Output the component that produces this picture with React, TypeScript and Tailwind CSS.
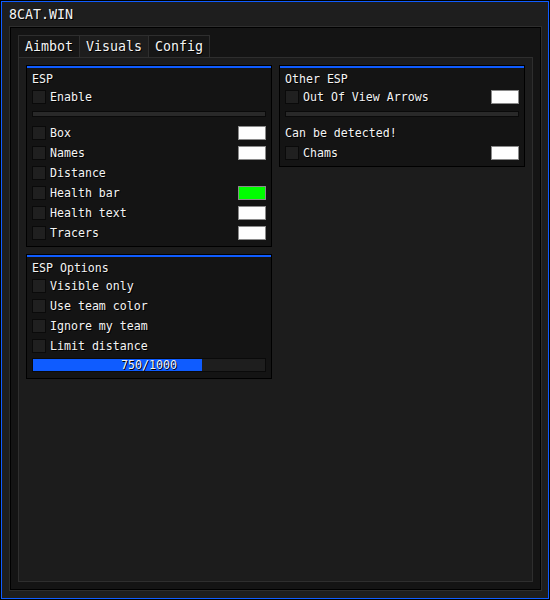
import React from 'react';

type Row = { label: string; color?: string };

const ESP_ROWS: Row[] = [
  { label: 'Box', color: 'white' },
  { label: 'Names', color: 'white' },
  { label: 'Distance' },
  { label: 'Health bar', color: 'green' },
  { label: 'Health text', color: 'white' },
  { label: 'Tracers', color: 'white' },
];

const OPTION_ROWS = ['Visible only', 'Use team color', 'Ignore my team', 'Limit distance'];

const shadow = '[text-shadow:1px_1px_0_#000]';

function Swatch({ color }: { color: string }) {
  return (
    <div
      className={
        color === 'green'
          ? 'w-[28px] h-[14px] border border-[#8a8a8a] bg-[#00ff00]'
          : 'w-[28px] h-[14px] border border-[#8a8a8a] bg-white'
      }
    />
  );
}

function CheckRow({ label, color }: Row) {
  return (
    <div className="flex items-center h-[14px] gap-[4px]">
      <div className="w-[14px] h-[14px] border border-[#0a0a0a] bg-[#202020]" />
      <span className={`flex-1 leading-[14px] ${shadow}`}>{label}</span>
      {color && <Swatch color={color} />}
    </div>
  );
}

function Separator() {
  return <div className="h-[6px] border border-[#0a0a0a] bg-[#292929]" />;
}

function Group({ title, children }: { title: string; children: React.ReactNode }) {
  return (
    <div className="border border-black bg-[#141414]">
      <div className="h-[2px] bg-[#0f5cff]" />
      <div className="px-[5px] pt-[4px] pb-[6px] flex flex-col">
        <div className={`h-[14px] leading-[14px] ${shadow}`}>{title}</div>
        {children}
      </div>
    </div>
  );
}

export default function App() {
  return (
    <div
      className="w-[550px] h-[600px] bg-black p-px text-[#f4f4f4]"
      style={{ fontFamily: '"DejaVu Sans Mono", monospace' }}
    >
      <div className="h-full border border-[#0f5cff] bg-[#1e1e1e] flex flex-col">
        <div className={`h-[24px] pl-[7px] pt-[2px] text-[13.3px] leading-[22px] ${shadow}`}>8CAT.WIN</div>

        <div className="ml-[7px] w-[533px] h-[565px] border border-[#2e2e2e]">
          <div className="h-full border border-black bg-[#141414] p-[7px] flex flex-col">
            {/* tabs */}
            <div className="flex h-[23px] text-[13.3px]">
              <div className={`px-[6px] border border-[#2e2e2e] bg-[#161616] leading-[21px] ${shadow}`}>Aimbot</div>
              <div className={`-ml-px px-[6px] border border-[#2e2e2e] bg-[#1d1d1d] leading-[21px] ${shadow}`}>Visuals</div>
              <div className={`-ml-px px-[6px] border border-[#2e2e2e] bg-[#161616] leading-[21px] ${shadow}`}>Config</div>
            </div>

            {/* tab content */}
            <div className="-mt-px flex-1 border border-[#2e2e2e] bg-[#1c1c1c] p-[7px] text-[11.6px]">
              <div className="grid grid-cols-2 gap-[7px] items-start">
                <div className="flex flex-col gap-[7px]">
                  <Group title="ESP">
                    <div className="mt-[4px]">
                      <CheckRow label="Enable" />
                    </div>
                    <div className="mt-[7px]">
                      <Separator />
                    </div>
                    <div className="mt-[9px] flex flex-col gap-[6px]">
                      {ESP_ROWS.map(r => (
                        <CheckRow key={r.label} label={r.label} color={r.color} />
                      ))}
                    </div>
                  </Group>

                  <Group title="ESP Options">
                    <div className="mt-[4px] flex flex-col gap-[6px]">
                      {OPTION_ROWS.map(l => (
                        <CheckRow key={l} label={l} />
                      ))}
                    </div>
                    <div className="mt-[5px] relative h-[14px] border border-[#0a0a0a] bg-[#1e1e1e]">
                      <div className="h-full w-[169px] bg-[#0f5cff]" />
                      <div className={`absolute inset-0 flex items-center justify-center leading-[12px] ${shadow}`}>
                        750/1000
                      </div>
                    </div>
                  </Group>
                </div>

                <Group title="Other ESP">
                  <div className="mt-[4px]">
                    <CheckRow label="Out Of View Arrows" color="white" />
                  </div>
                  <div className="mt-[7px]">
                    <Separator />
                  </div>
                  <div className={`mt-[9px] h-[14px] leading-[14px] ${shadow}`}>Can be detected!</div>
                  <div className="mt-[6px]">
                    <CheckRow label="Chams" color="white" />
                  </div>
                </Group>
              </div>
            </div>
          </div>
        </div>
      </div>
    </div>
  );
}
